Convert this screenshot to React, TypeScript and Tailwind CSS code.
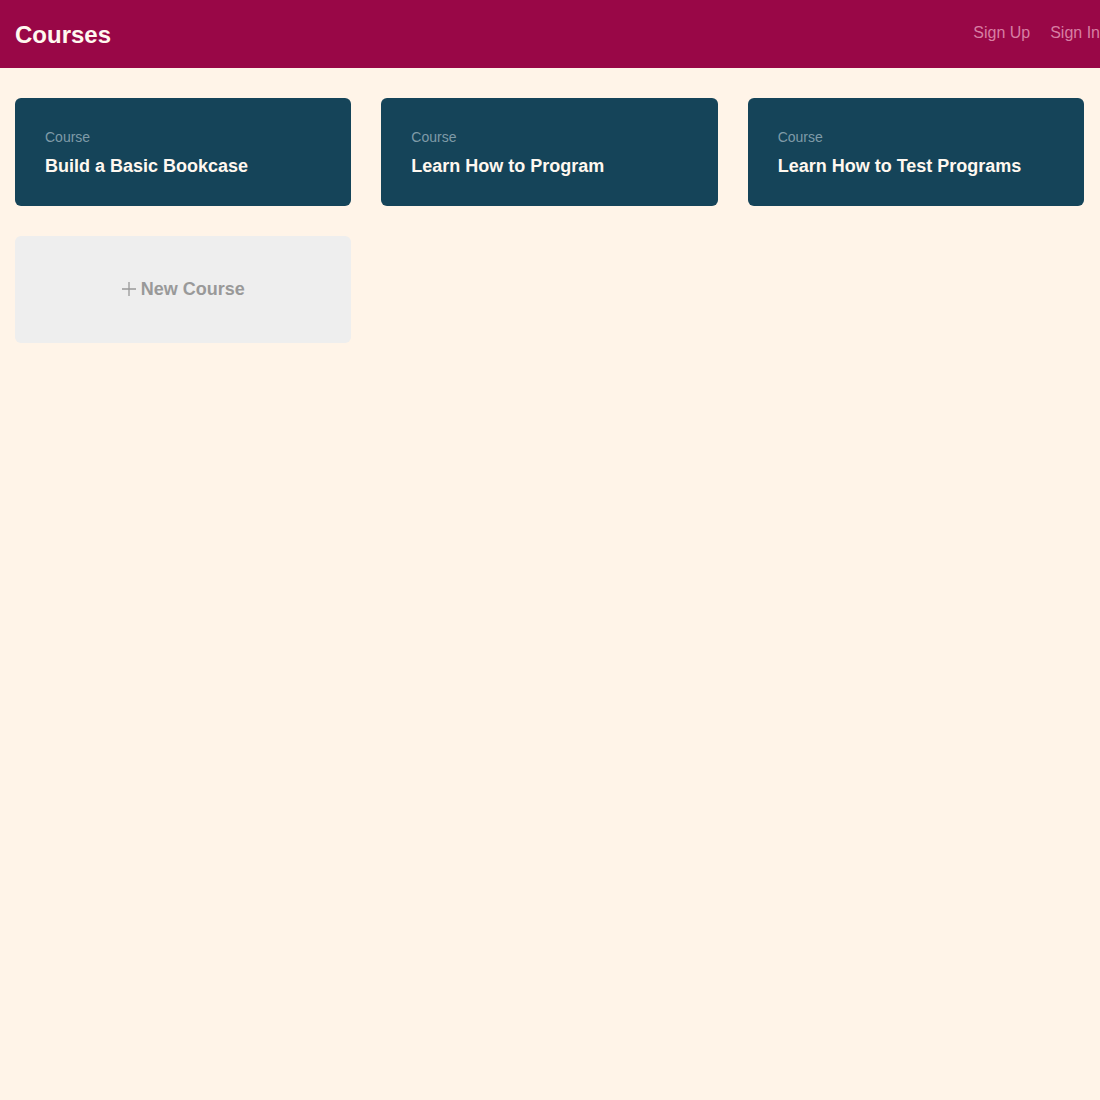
const courses = ["Build a Basic Bookcase", "Learn How to Program", "Learn How to Test Programs"];

function CourseCard({ title }: { title: string }) {
  return (
    <div className="rounded-md bg-[#154459] px-[30px] py-[29px]">
      <p className="text-sm leading-5 text-[#7f9ba8]">Course</p>
      <h2 className="mt-2 text-lg leading-[22px] font-bold text-[#fff8f0]">{title}</h2>
    </div>
  );
}

export default function App() {
  return (
    <div className="min-h-[1100px] bg-[#fff4e8] font-['Liberation_Sans',Arial,sans-serif]">
      <header className="flex h-[68px] items-center overflow-hidden bg-[#990747] pl-[15px]">
        <h1 className="mt-[2px] text-2xl font-bold text-[#fff8f0]">Courses</h1>
        <nav className="ml-auto -mt-[2px] flex gap-5 text-base text-[#d77ea3]">
          <a href="#">Sign Up</a>
          <a href="#">Sign In</a>
        </nav>
      </header>
      <main className="grid grid-cols-3 gap-[30px] pl-[15px] pr-[16px] pt-[30px]">
        {courses.map((c) => (
          <CourseCard key={c} title={c} />
        ))}
        <div className="flex h-[107px] items-center justify-center rounded-md bg-[#eeeeee] pb-[2px] text-lg font-bold text-[#999999]">
          <svg width="14" height="14" viewBox="0 0 14 14" className="mr-[5px]" stroke="#999999" strokeWidth="1.3">
            <path d="M7 0v14M0 7h14" />
          </svg>
          New Course
        </div>
      </main>
    </div>
  );
}
